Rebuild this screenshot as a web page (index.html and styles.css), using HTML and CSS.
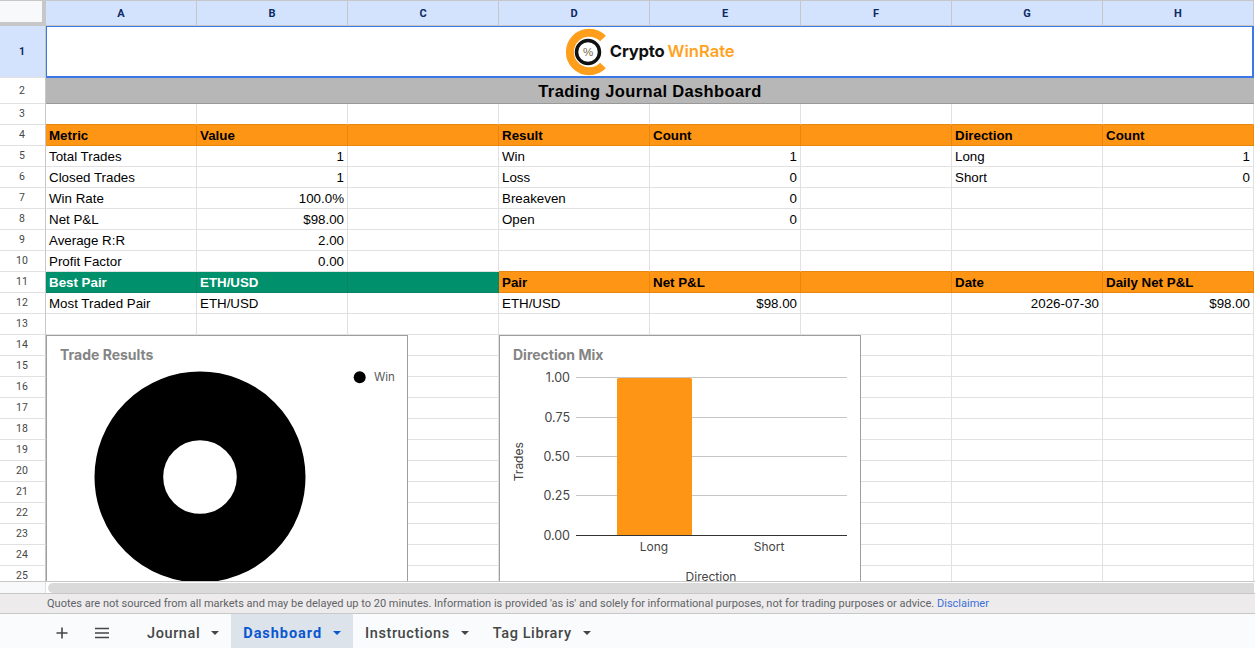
FILE: index.html
```html
<!DOCTYPE html>
<html lang="en">
<head>
<meta charset="utf-8">
<title>Trading Journal Dashboard</title>
<link rel="stylesheet" href="styles.css">
</head>
<body>
<div class="app">
  <div class="viewport">
    <div class="sheet">
      <div class="corner"></div>
      <div class="ch">A</div><div class="ch">B</div><div class="ch">C</div><div class="ch">D</div><div class="ch">E</div><div class="ch">F</div><div class="ch">G</div><div class="ch">H</div>

      <div class="rh rh-sel">1</div>
      <div class="c merged logo-cell">
        <svg class="logo-mark" width="44.500" height="48" viewBox="0 0 44.500 48">
          <path d="M38 10.500 A19.300 19.300 0 1 0 38 37.500" fill="none" stroke="#ff9e1b" stroke-width="8"/>
          <circle cx="23" cy="24" r="11.500" fill="#fff" stroke="#111" stroke-width="3.500"/>
          <text x="23" y="28" class="logo-pct">%</text>
        </svg>
        <span class="logo-text">Crypto</span><span class="logo-text logo-win">WinRate</span>
      </div>

      <div class="rh">2</div>
      <div class="c merged title">Trading Journal Dashboard</div>

      <div class="rh">3</div>
      <div class="c pre-hd"></div><div class="c pre-hd"></div><div class="c pre-hd"></div><div class="c pre-hd"></div><div class="c pre-hd"></div><div class="c pre-hd"></div><div class="c pre-hd"></div><div class="c pre-hd"></div>

      <div class="rh">4</div>
      <div class="c hd">Metric</div><div class="c hd">Value</div><div class="c hd"></div><div class="c hd">Result</div><div class="c hd">Count</div><div class="c hd"></div><div class="c hd">Direction</div><div class="c hd">Count</div>

      <div class="rh">5</div>
      <div class="c">Total Trades</div><div class="c r">1</div><div class="c"></div><div class="c">Win</div><div class="c r">1</div><div class="c"></div><div class="c">Long</div><div class="c r">1</div>

      <div class="rh">6</div>
      <div class="c">Closed Trades</div><div class="c r">1</div><div class="c"></div><div class="c">Loss</div><div class="c r">0</div><div class="c"></div><div class="c">Short</div><div class="c r">0</div>

      <div class="rh">7</div>
      <div class="c">Win Rate</div><div class="c r">100.0%</div><div class="c"></div><div class="c">Breakeven</div><div class="c r">0</div><div class="c"></div><div class="c"></div><div class="c"></div>

      <div class="rh">8</div>
      <div class="c">Net P&amp;L</div><div class="c r">$98.00</div><div class="c"></div><div class="c">Open</div><div class="c r">0</div><div class="c"></div><div class="c"></div><div class="c"></div>

      <div class="rh">9</div>
      <div class="c">Average R:R</div><div class="c r">2.00</div><div class="c"></div><div class="c"></div><div class="c"></div><div class="c"></div><div class="c"></div><div class="c"></div>

      <div class="rh">10</div>
      <div class="c">Profit Factor</div><div class="c r">0.00</div><div class="c"></div><div class="c pre-hd"></div><div class="c pre-hd"></div><div class="c pre-hd"></div><div class="c pre-hd"></div><div class="c pre-hd"></div>

      <div class="rh">11</div>
      <div class="c best">Best Pair</div><div class="c best">ETH/USD</div><div class="c best"></div><div class="c hd">Pair</div><div class="c hd">Net P&amp;L</div><div class="c hd"></div><div class="c hd">Date</div><div class="c hd">Daily Net P&amp;L</div>

      <div class="rh">12</div>
      <div class="c">Most Traded Pair</div><div class="c">ETH/USD</div><div class="c"></div><div class="c">ETH/USD</div><div class="c r">$98.00</div><div class="c"></div><div class="c r">2026-07-30</div><div class="c r">$98.00</div>

      <div class="rh">13</div>
      <div class="c"></div><div class="c"></div><div class="c"></div><div class="c"></div><div class="c"></div><div class="c"></div><div class="c"></div><div class="c"></div>

      <div class="rh">14</div><div class="c"></div><div class="c"></div><div class="c"></div><div class="c"></div><div class="c"></div><div class="c"></div><div class="c"></div><div class="c"></div>
      <div class="rh">15</div><div class="c"></div><div class="c"></div><div class="c"></div><div class="c"></div><div class="c"></div><div class="c"></div><div class="c"></div><div class="c"></div>
      <div class="rh">16</div><div class="c"></div><div class="c"></div><div class="c"></div><div class="c"></div><div class="c"></div><div class="c"></div><div class="c"></div><div class="c"></div>
      <div class="rh">17</div><div class="c"></div><div class="c"></div><div class="c"></div><div class="c"></div><div class="c"></div><div class="c"></div><div class="c"></div><div class="c"></div>
      <div class="rh">18</div><div class="c"></div><div class="c"></div><div class="c"></div><div class="c"></div><div class="c"></div><div class="c"></div><div class="c"></div><div class="c"></div>
      <div class="rh">19</div><div class="c"></div><div class="c"></div><div class="c"></div><div class="c"></div><div class="c"></div><div class="c"></div><div class="c"></div><div class="c"></div>
      <div class="rh">20</div><div class="c"></div><div class="c"></div><div class="c"></div><div class="c"></div><div class="c"></div><div class="c"></div><div class="c"></div><div class="c"></div>
      <div class="rh">21</div><div class="c"></div><div class="c"></div><div class="c"></div><div class="c"></div><div class="c"></div><div class="c"></div><div class="c"></div><div class="c"></div>
      <div class="rh">22</div><div class="c"></div><div class="c"></div><div class="c"></div><div class="c"></div><div class="c"></div><div class="c"></div><div class="c"></div><div class="c"></div>
      <div class="rh">23</div><div class="c"></div><div class="c"></div><div class="c"></div><div class="c"></div><div class="c"></div><div class="c"></div><div class="c"></div><div class="c"></div>
      <div class="rh">24</div><div class="c"></div><div class="c"></div><div class="c"></div><div class="c"></div><div class="c"></div><div class="c"></div><div class="c"></div><div class="c"></div>
      <div class="rh">25</div><div class="c"></div><div class="c"></div><div class="c"></div><div class="c"></div><div class="c"></div><div class="c"></div><div class="c"></div><div class="c"></div>
    </div>

    <div class="sel-box"></div>

    <div class="chart chart-results">
      <svg width="360" height="260" viewBox="0 0 360 260">
        <text x="13" y="24" class="ch-title">Trade Results</text>
        <circle cx="153" cy="141" r="71.150" fill="none" stroke="#000" stroke-width="68.700"/>
        <circle cx="312.700" cy="41.300" r="6" fill="#000"/>
        <text x="327" y="45" class="ch-label">Win</text>
      </svg>
    </div>

    <div class="chart chart-mix">
      <svg width="360" height="260" viewBox="0 0 360 260">
        <text x="13" y="24" class="ch-title">Direction Mix</text>
        <line x1="76" x2="347" y1="41.500" y2="41.500" class="gl"/>
        <line x1="76" x2="347" y1="81.500" y2="81.500" class="gl"/>
        <line x1="76" x2="347" y1="120.500" y2="120.500" class="gl"/>
        <line x1="76" x2="347" y1="159.500" y2="159.500" class="gl"/>
        <rect x="117" y="42" width="75" height="158" rx="1.500" fill="#ff9514"/>
        <line x1="76" x2="347" y1="199.500" y2="199.500" class="axis"/>
        <text x="70" y="45.500" class="ch-num">1.00</text>
        <text x="70" y="85.500" class="ch-num">0.75</text>
        <text x="70" y="124.500" class="ch-num">0.50</text>
        <text x="70" y="163.500" class="ch-num">0.25</text>
        <text x="70" y="203.500" class="ch-num">0.00</text>
        <text x="154" y="215" class="ch-mid">Long</text>
        <text x="269" y="215" class="ch-mid">Short</text>
        <text x="211" y="245" class="ch-mid">Direction</text>
        <text x="23" y="125.700" class="ch-mid" transform="rotate(-90 23 125.700)">Trades</text>
      </svg>
    </div>
  </div>

  <div class="scrollbar"><div class="scroll-left"></div><div class="scroll-track"><div class="scroll-thumb"></div></div></div>

  <div class="notice">Quotes are not sourced from all markets and may be delayed up to 20 minutes. Information is provided 'as is' and solely for informational purposes, not for trading purposes or advice.&nbsp;<span class="notice-link">Disclaimer</span></div>

  <div class="tabs">
    <button class="icon-btn" aria-label="Add sheet">
      <svg width="14" height="14" viewBox="0 0 14 14"><path d="M7 1.500v11M1.500 7h11" stroke="#444746" stroke-width="1.600" fill="none"/></svg>
    </button>
    <button class="icon-btn menu-btn" aria-label="All sheets">
      <svg width="16" height="12" viewBox="0 0 16 12"><path d="M1 1.500h14M1 6h14M1 10.500h14" stroke="#444746" stroke-width="1.500" fill="none"/></svg>
    </button>
    <div class="tab">Journal<span class="caret"></span></div>
    <div class="tab tab-active">Dashboard<span class="caret"></span></div>
    <div class="tab">Instructions<span class="caret"></span></div>
    <div class="tab">Tag Library<span class="caret"></span></div>
  </div>
</div>
</body>
</html>
```
FILE: styles.css
```css
* { box-sizing: border-box; }
html, body { margin: 0; padding: 0; height: 100%; overflow: hidden; background: #fff; }
body { font-family: "Liberation Sans", Arial, sans-serif; font-size: 13.33px; color: #000; }
.app { display: flex; flex-direction: column; width: 1255px; height: 648px; }

.viewport { position: relative; height: 581px; overflow: hidden; flex: none; }
.sheet {
  display: grid;
  grid-template-columns: 46px repeat(8, 151px);
  grid-template-rows: 26px 52px 26px 21px repeat(22, 21px);
  width: 1254px;
}
.corner { background: #f8f9fa; border-top: 1px solid #c7c7c7; border-right: 4px solid #c7c7c7; border-bottom: 4px solid #c7c7c7; }
.ch {
  background: #d3e3fd; color: #0b2a66; font: bold 11px/25px Roboto, sans-serif;
  text-align: center; border-top: 1px solid #c7c7c7; border-right: 1px solid #c7c7c7; border-bottom: 1px solid #c7c7c7;
}
.rh {
  background: #fff; color: #444746; font: 10.5px/20px Roboto, sans-serif;
  border-right: 1px solid #c7c7c7; border-bottom: 1px solid #e1e1e1; padding-right: 1px;
  display: flex; align-items: center; justify-content: center;
}
.rh-sel { background: #d3e3fd; color: #0b2a66; font-weight: bold; }
.c {
  border-right: 1px solid #e1e1e1; border-bottom: 1px solid #e1e1e1; padding: 0 3px;
  line-height: 22px; white-space: nowrap; overflow: hidden;
}
.r { text-align: right; }
.pre-hd { border-bottom-color: #e8860e; }
.hd { background: #ff9514; font-weight: bold; border-color: #e8860e; }
.best { background: #00906b; color: #fff; font-weight: bold; border-color: #0a8365; }
.merged { grid-column: span 8; }
.logo-cell { display: flex; align-items: center; justify-content: center; padding: 0; border: 0; background: #fff; }
.logo-mark { flex: none; }
.logo-pct { font: 11.5px "Liberation Sans", sans-serif; fill: #7a6a50; text-anchor: middle; }
.logo-text { font: 700 16.6px Inter, sans-serif; color: #111; letter-spacing: -.2px; padding-bottom: 3px; }
.logo-win { color: #ffa31f; margin-left: 3px; font-weight: 600; letter-spacing: 0; }
.title { background: #b7b7b7; font-size: 16.5px; font-weight: bold; line-height: 27px; letter-spacing: .35px; text-align: center; border-bottom: 1px solid #999; border-right: 0; }
.sel-box { position: absolute; left: 46px; top: 26px; width: 1208px; height: 52px; border-style: solid; border-color: #3b78e7; border-width: 1px 2px 2px 1px; pointer-events: none; }

.chart { position: absolute; top: 335px; width: 362px; height: 262px; background: #fff; border: 1px solid #9e9e9e; }
.chart svg { display: block; }
.chart-results { left: 46px; }
.chart-mix { left: 499px; }
.ch-title { font: bold 14px Inter, sans-serif; fill: #848484; }
.ch-label { font: 11.5px Inter, sans-serif; fill: #5a5a5a; }
.ch-num { font: 12.500px Inter, sans-serif; fill: #444; text-anchor: end; }
.ch-mid { font: 12px Inter, sans-serif; fill: #444; text-anchor: middle; }
.gl { stroke: #c6c6c6; stroke-width: 1; }
.axis { stroke: #333; stroke-width: 1; }

.scrollbar { flex: none; height: 12px; display: flex; border-top: 1px solid #c7c7c7; background: #fff; }
.scroll-left { width: 46px; background: #f8f9fa; border-right: 1px solid #e1e1e1; }
.scroll-track { flex: 1; padding: 1px 1px 0 2px; }
.scroll-thumb { height: 100%; background: #dadada; border-radius: 5px 0 0 5px; }

.notice {
  flex: none; height: 21px; background: #edebeb; border-top: 1px solid #c7c7c7; border-bottom: 1px solid #c7c7c7;
  font: 11px/19px Roboto, sans-serif; color: #5f6368; padding-left: 47px; white-space: nowrap;
}
.notice-link { color: #3b6fd8; }

.tabs { flex: 1; display: flex; align-items: stretch; background: #f9fbfd; padding-left: 48px; }
.icon-btn { background: none; border: 0; padding: 4px 0 0; width: 28px; display: flex; align-items: center; justify-content: center; }
.menu-btn { width: 52px; margin-right: 7px; }
.tab {
  display: flex; align-items: center; font: 500 14.5px Roboto, sans-serif; color: #444746; padding: 4px 12px 0; letter-spacing: .6px;
}
.tab-active { background: #dce3ea; color: #0b57d0; font-weight: 700; letter-spacing: .95px; }
.caret { width: 0; height: 0; border-left: 4px solid transparent; border-right: 4px solid transparent; border-top: 4px solid currentColor; margin-left: 11px; }
```
